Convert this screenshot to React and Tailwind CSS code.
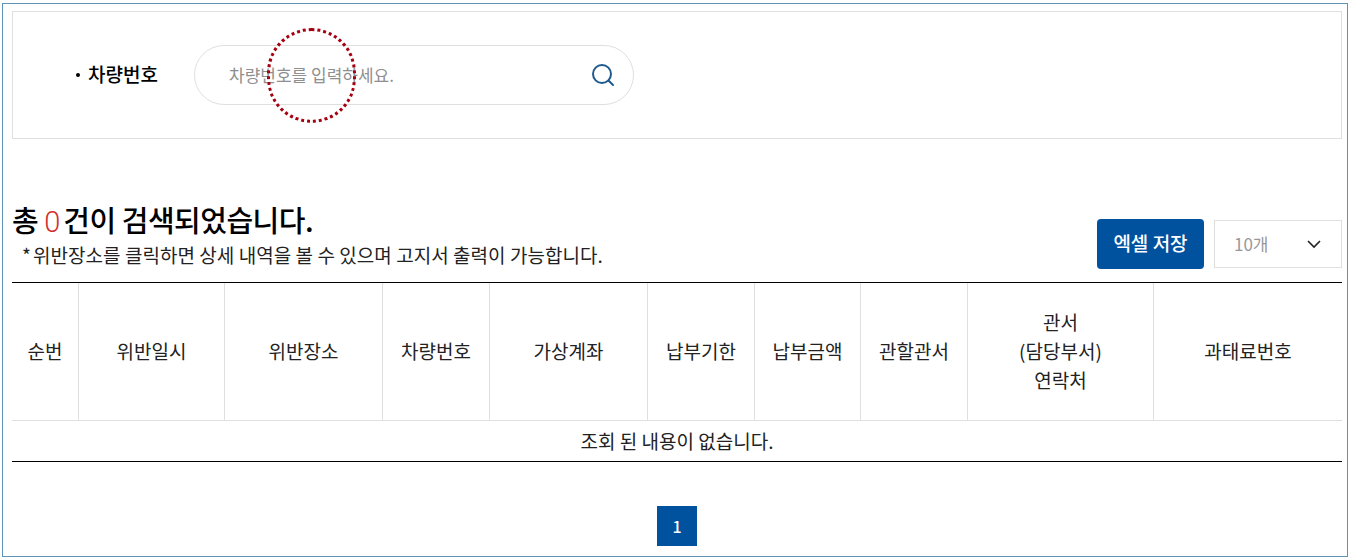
const font = { fontFamily: '"Noto Sans CJK KR", "Noto Sans", sans-serif' };
const cols = [
  ['w-[67px]', '순번'],
  ['w-[146px]', '위반일시'],
  ['w-[158px]', '위반장소'],
  ['w-[107px]', '차량번호'],
  ['w-[158px]', '가상계좌'],
  ['w-[107px]', '납부기한'],
  ['w-[106px]', '납부금액'],
  ['w-[107px]', '관할관서'],
  ['w-[186px]', null],
  ['w-[188px]', '과태료번호'],
];

export default function App() {
  return (
    <div className="w-[1350px] h-[559px] bg-white overflow-hidden pt-[3px] pl-[2px] text-[#111]" style={font}>
      <div className="relative w-[1346px] h-[554px] border border-[#5f93b8] pt-[7px] pl-[9px]">
        <section className="w-[1330px] h-[128px] border border-[#dfdfdf] flex items-center pl-[63px]">
          <div className="w-[118px] flex items-center">
            <span className="w-[4px] h-[4px] rounded-full bg-black mr-[8px]"></span>
            <span className="text-[19px] font-medium leading-[24px] pb-[2px] whitespace-nowrap text-black">차량번호</span>
          </div>
          <div className="w-[440px] h-[60px] border border-[#dfdfdf] rounded-[30px] flex items-center justify-between pl-[34px] pr-[17px]">
            <span className="text-[17px] text-[#8f8f8f]">차량번호를 입력하세요.</span>
            <svg width="26" height="26" viewBox="0 0 26 26" fill="none" stroke="#1f5a8f" strokeWidth="2" strokeLinecap="round">
              <circle cx="12" cy="12" r="9" />
              <path d="M18.5 18.5L23 23" />
            </svg>
          </div>
        </section>

        <div className="w-[1330px] h-[143px] flex items-end justify-between">
          <div className="pb-[15px]">
            <h2 className="text-[29px] leading-[36px] font-medium tracking-[-0.5px] text-black pb-[6px] whitespace-nowrap">
              총 <span className="font-['Roboto'] font-light leading-[0] text-[#d32f2f] tracking-[3px]">0</span>건이 검색되었습니다.
            </h2>
            <p className="pl-[10px] text-[19px] leading-[24px] tracking-[0.05px] text-[#222] whitespace-nowrap"><span className="mr-[2px]">*</span>위반장소를 클릭하면 상세 내역을 볼 수 있으며 고지서 출력이 가능합니다.</p>
          </div>
          <div className="flex items-center gap-[10px] pb-[13px]">
            <button className="w-[107px] h-[50px] rounded-[4px] bg-[#00529f] text-white text-[19px] font-medium pb-[2px]">엑셀 저장</button>
            <div className="w-[128px] h-[48px] border border-[#dfdfdf] flex items-center justify-between pl-[19px] pr-[19px]">
              <span className="text-[17px] text-[#999]">10개</span>
              <svg width="16" height="10" viewBox="0 0 16 10" fill="none" stroke="#222" strokeWidth="1.6"><path d="M2 2l6 6 6-6" /></svg>
            </div>
          </div>
        </div>

        <div className="w-[1330px] border-t border-b border-t-black border-b-black">
          <div className="flex h-[138px] border-b border-[#dfdfdf]">
            {cols.map(([w, label], i) => (
              <div key={i} className={`${w} flex items-center justify-center text-center text-[19px] leading-[29px] text-[#222] pb-[3px] ${i < 9 ? 'border-r border-[#dfdfdf]' : ''}`}>
                {label ?? <span>관서<br />(담당부서)<br />연락처</span>}
              </div>
            ))}
          </div>
          <div className="h-[40px] flex items-center justify-center text-[19px] text-[#222]">조회 된 내용이 없습니다.</div>
        </div>

        <div className="w-[1330px] flex justify-center pt-[44px]">
          <span className="w-[40px] h-[40px] bg-[#00529f] text-white text-[16px] font-medium flex items-center justify-center">1</span>
        </div>

        <div className="absolute left-[264px] top-[24px] w-[89px] h-[95px] rounded-full border-[3px] border-dotted border-[#a50010]"></div>
      </div>
    </div>
  );
}
